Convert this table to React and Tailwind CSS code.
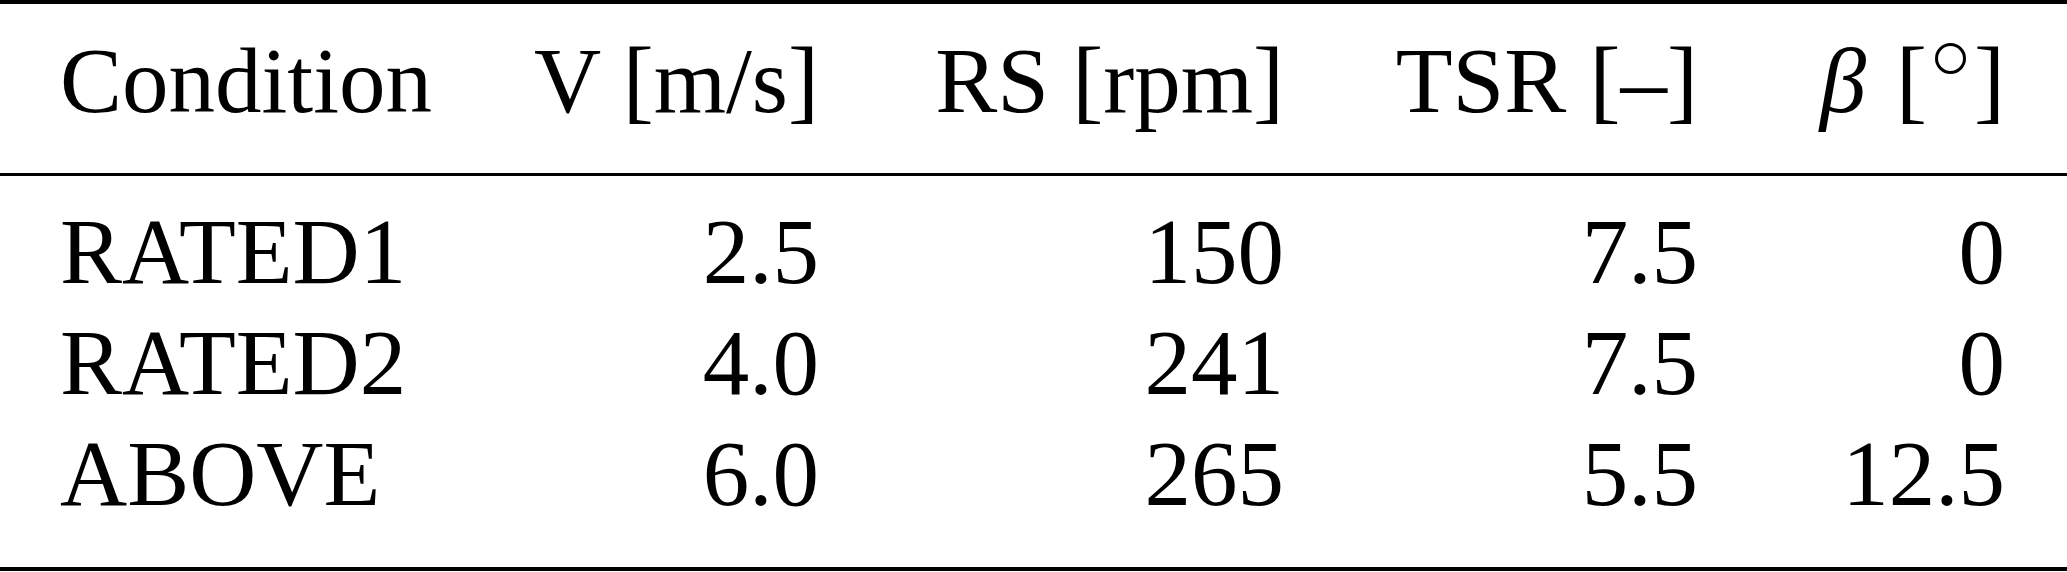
import React from 'react';

const rows = [
  ['RATED1', '2.5', '150', '7.5', '0'],
  ['RATED2', '4.0', '241', '7.5', '0'],
  ['ABOVE', '6.0', '265', '5.5', '12.5'],
];

const gridCls =
  'grid grid-cols-[372px_387px_465px_414px_307px] pl-[60px] pr-[62px] text-[93px] leading-[111px] whitespace-nowrap';

const App = () => {
  return (
    <div className="w-[2067px] h-[572px] bg-white text-black font-['Liberation_Serif','Times_New_Roman',serif]">
      {/* top rule */}
      <div className="h-[4px] bg-black" />

      {/* header */}
      <div className={`${gridCls} mt-[21px]`}>
        <div>Condition</div>
        <div className="text-right">V [m/s]</div>
        <div className="text-right">RS [rpm]</div>
        <div className="text-right">TSR [–]</div>
        <div className="text-right">
          <span className="italic">β</span>
          <span className="ml-[30px]">[</span>
          <span className="inline-block w-[31px] h-[31px] rounded-full border-[3.5px] border-black mx-[8px] align-[38px]" />
          <span>]</span>
        </div>
      </div>

      {/* mid rule */}
      <div className="h-[3px] bg-black mt-[37px]" />

      {/* body */}
      <div className="mt-[20px]">
        {rows.map((r) => (
          <div key={r[0]} className={gridCls}>
            <div>{r[0]}</div>
            <div className="text-right">{r[1]}</div>
            <div className="text-right">{r[2]}</div>
            <div className="text-right">{r[3]}</div>
            <div className="text-right">{r[4]}</div>
          </div>
        ))}
      </div>

      {/* bottom rule */}
      <div className="h-[4px] bg-black mt-[38px]" />
    </div>
  );
};

export default App;
